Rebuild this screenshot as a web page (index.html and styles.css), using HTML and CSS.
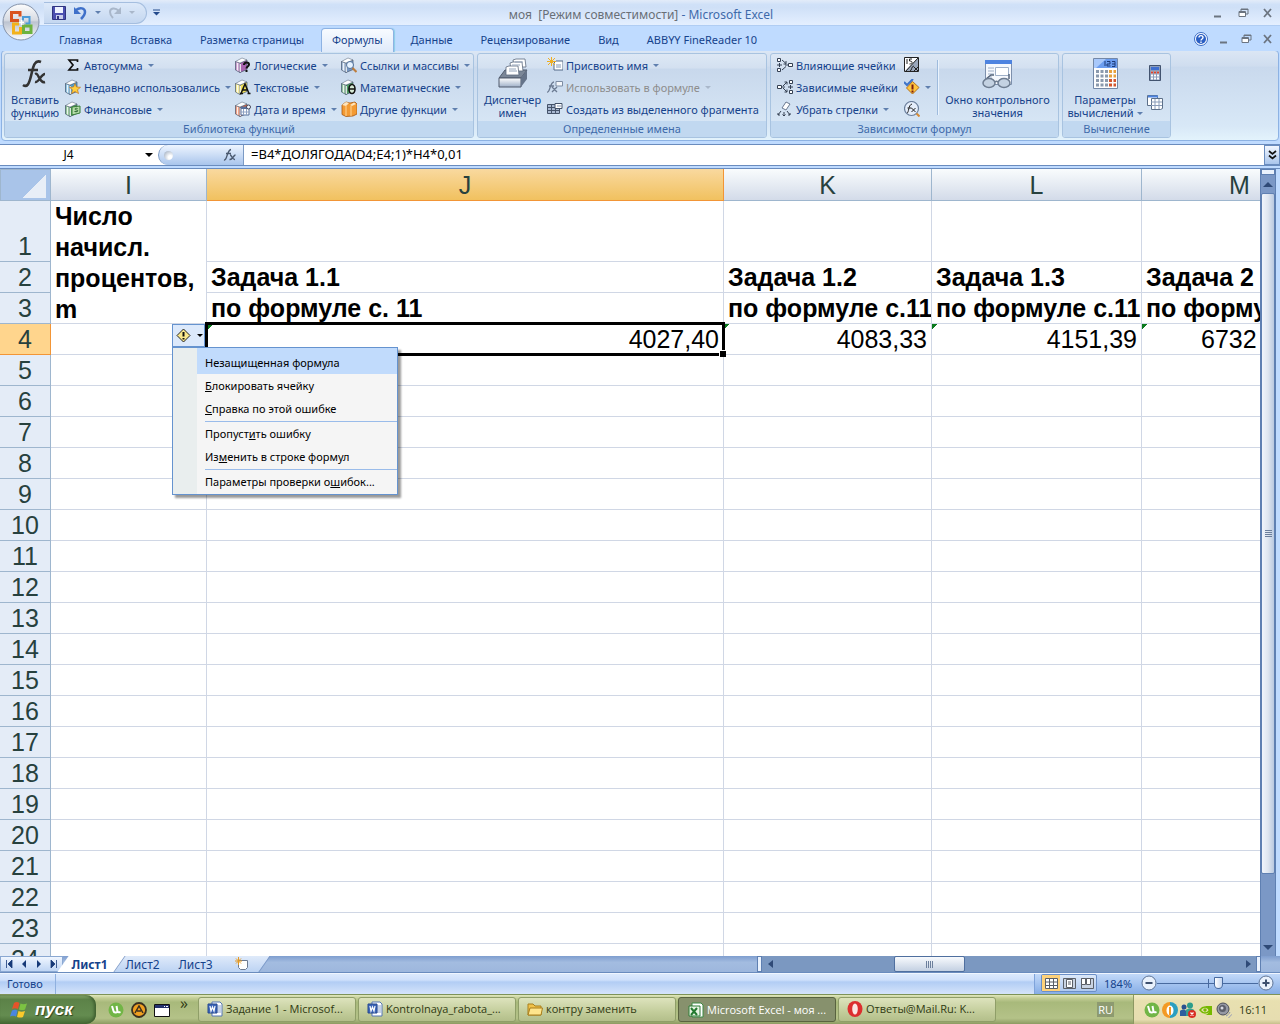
FILE: index.html
```html
<!DOCTYPE html>
<html lang="ru">
<head>
  <meta charset="UTF-8">
  <meta name="viewport" content="width=device-width, initial-scale=1.0">
  <title>моя [Режим совместимости] - Microsoft Excel</title>
  <link rel="stylesheet" href="styles.css">
</head>
<body>
  <svg class="defs" aria-hidden="true">
    <linearGradient id="g-steel" x1="0" y1="0" x2="0" y2="1"><stop offset="0" stop-color="#fff"/><stop offset="1" stop-color="#9fb0c8"/></linearGradient>
    <linearGradient id="g-orb" x1="0" y1="0" x2="0" y2="1"><stop offset="0" stop-color="#fdfdfd"/><stop offset=".45" stop-color="#d7dbe3"/><stop offset=".5" stop-color="#bcc3d0"/><stop offset="1" stop-color="#fbfcfe"/></linearGradient>
    <symbol id="book" viewBox="0 0 16 16">
      <path d="M.5 4.500L5 6v9.500L.5 13z" fill="currentColor" stroke="#4a5a70" stroke-width=".7"/>
      <path d="M5 6l7-3v9.500l-7 3z" fill="currentColor" stroke="#4a5a70" stroke-width=".7"/>
      <path d="M.5 4.500L7 1l5 2-7 3z" fill="#fff" stroke="#4a5a70" stroke-width=".5"/>
      <path d="M1 5l4 1.500v8.500l-4-2z" fill="#fff" fill-opacity=".4"/>
      <path d="M2.500 6v7.500M5.500 7v8" stroke="#fff" stroke-opacity=".8" fill="none"/>
    </symbol>
    <symbol id="word" viewBox="0 0 16 16">
      <path d="M5 1h8l2 2v12H5z" fill="#fff" stroke="#5577b5"/><path d="M10 5h4M10 7h4M10 9h4M10 11h4" stroke="#8ba4d0"/>
      <path d="M1 3h9v9H1z" fill="#3c66b8" stroke="#27498f"/><path d="M3 5l1 5 1.500-4L7 10l1-5" fill="none" stroke="#fff" stroke-width="1.200"/>
    </symbol>
    <symbol id="utor" viewBox="0 0 16 16">
      <circle cx="8" cy="8" r="7.500" fill="#71b546"/><path d="M4 4l1.500 5c.5 2 3 2 4 .5L8.500 4M9.500 9.500c.5 1 1.500 1 3 .5" fill="none" stroke="#fff" stroke-width="2"/>
    </symbol>
    <symbol id="min" viewBox="0 0 12 12"><path d="M2 9.500h7" stroke="#6b7480" stroke-width="2"/></symbol>
    <symbol id="restore" viewBox="0 0 12 12"><path d="M4 4V2h7v5H9M4 2.500h7" stroke="#6b7480" fill="none"/><path d="M2 4.500h6.500v5H2zM2 5.500h6.500" stroke="#6b7480" fill="#fff"/></symbol>
    <symbol id="close" viewBox="0 0 12 12"><path d="M2 2l7 8M9 2l-7 8" stroke="#6b7480" stroke-width="1.800"/></symbol>
  </svg>

  <header class="titlebar">
    <button class="office" aria-label="Office">
      <svg viewBox="0 0 38 38" width="38" height="38"><circle cx="19" cy="19" r="18" fill="url(#g-orb)" stroke="#8593aa"/>
        <g fill="none" stroke-width="3"><path d="M17 17.500H9.500V9.500h8.500v4" stroke="#d9531e"/><path d="M21 17.500V14h6.500v6.500h-4" stroke="#4a9bd8" stroke-width="2"/><path d="M17 21h-5.500v9h7v-6" stroke="#f3b21b"/><path d="M21.500 22v7.500h7.500v-6.500h-7" stroke="#6db33f"/><path d="M17 19.500h5M19.500 17v5" stroke="#fff" stroke-width="1.500"/></g></svg>
    </button>
    <div class="qat">
      <button aria-label="Сохранить"><svg width="16" height="16" viewBox="0 0 16 16"><path d="M1.500 1.500h13v13h-13z" fill="#4b4fb0" stroke="#303480"/><path d="M4 2h8v6H4z" fill="#eef2ff"/><path d="M5 10h7v4H5z" fill="#c8cdea"/><path d="M6 11h2v3H6z" fill="#303480"/></svg></button>
      <button aria-label="Отменить"><svg width="16" height="16" viewBox="0 0 16 16"><path d="M3 5c4-3 9-2 9 2 0 3-2 5-4 7" fill="none" stroke="#3f70c9" stroke-width="2.500"/><path d="M1 2v7h7z" fill="#3f70c9"/></svg></button>
      <span class="caret"></span>
      <button aria-label="Вернуть"><svg width="16" height="16" viewBox="0 0 16 16"><path d="M12 6C8 2 3 3 3 7c0 3 1 4 3 6" fill="none" stroke="#a9b7ca" stroke-width="2"/><path d="M14 2v7H7z" fill="#a9b7ca"/></svg></button>
      <span class="caret pale"></span>
    </div>
    <button class="qat-more" aria-label="Настройка панели"><svg width="7" height="7" viewBox="0 0 7 7"><path d="M0 1h7" stroke="#234a8c"/><path d="M0 3h7L3.500 6.500z" fill="#234a8c"/></svg></button>
    <h1><span>моя &nbsp;[Режим совместимости]</span> - Microsoft Excel</h1>
    <div class="winctl">
      <button aria-label="Свернуть"><svg width="12" height="12"><use href="#min"/></svg></button>
      <button aria-label="Развернуть"><svg width="12" height="12"><use href="#restore"/></svg></button>
      <button aria-label="Закрыть"><svg width="12" height="12"><use href="#close"/></svg></button>
    </div>
  </header>

  <nav class="tabs">
    <button>Главная</button>
    <button>Вставка</button>
    <button>Разметка страницы</button>
    <button class="active">Формулы</button>
    <button>Данные</button>
    <button>Рецензирование</button>
    <button>Вид</button>
    <button>ABBYY FineReader 10</button>
    <div class="winctl">
      <button aria-label="Справка"><svg width="14" height="14" viewBox="0 0 14 14"><circle cx="7" cy="7" r="6.500" fill="#fff" stroke="#3a6cc4"/><circle cx="7" cy="7" r="5" fill="#2a5fc4"/><path d="M5 5.500c0-2.500 4-2.500 4 0C9 7 7 7 7 8.500M7 9.500v1.500" fill="none" stroke="#fff" stroke-width="1.400"/></svg></button>
      <button aria-label="Свернуть книгу"><svg width="12" height="12"><use href="#min"/></svg></button>
      <button aria-label="Развернуть книгу"><svg width="12" height="12"><use href="#restore"/></svg></button>
      <button aria-label="Закрыть книгу"><svg width="12" height="12"><use href="#close"/></svg></button>
    </div>
  </nav>

  <section class="ribbon">
    <div class="group g-library">
      <div class="tools">
        <button class="big">
          <svg width="32" height="32" viewBox="0 0 32 32"><path d="M4 27c4 3 6-1 8-9s3-17 10-14M9 12h10" fill="none" stroke="#333" stroke-width="2.600"/><path d="M16 16c4-2 4 10 10 8M26 16c-4 0-6 9-10 8" fill="none" stroke="#333" stroke-width="2.400"/></svg>
          <span>Вставить<br>функцию</span>
        </button>
        <div class="col c1">
          <button><svg width="16" height="16" viewBox="0 0 16 16"><path d="M12.500 5V3H4l4 5-4 5h8.500v-2" fill="none" stroke="#111" stroke-width="1.700"/></svg>Автосумма<i class="caret"></i></button>
          <button><svg width="16" height="16" viewBox="0 0 16 16"><use href="#book" color="#4fa0d0"/><path d="M10 4.500l1.500 3.500 4 .3-3 2.500 1 3.700-3.500-2-3.500 2 1-3.700-3-2.500 4-.3z" fill="#ffcf3f" stroke="#c4761d" stroke-width=".7"/></svg>Недавно использовались<i class="caret"></i></button>
          <button><svg width="16" height="16" viewBox="0 0 16 16"><use href="#book" color="#4fa055"/><path d="M7 6l8-1v7l-8 2z" fill="#b5dda8" stroke="#377d37"/><path d="M12.500 7.500c-3-1-3 1.500-1 1.500s2 2.500-2 1.500" fill="none" stroke="#24612a"/></svg>Финансовые<i class="caret"></i></button>
        </div>
        <div class="col c2">
          <button><svg width="16" height="16" viewBox="0 0 16 16"><use href="#book" color="#a964b0"/><path d="M9 8c0-3.500 5-3 5-.5 0 2-2.500 2-2.500 4M11.500 13v2" fill="none" stroke="#111" stroke-width="2"/></svg>Логические<i class="caret"></i></button>
          <button><svg width="16" height="16" viewBox="0 0 16 16"><use href="#book" color="#efe05a"/><path d="M6 14.500L10 5l4 9.500M7.500 11h5M5 14.500h3M12.500 14.500h3" fill="none" stroke="#111" stroke-width="1.500"/></svg>Текстовые<i class="caret"></i></button>
          <button><svg width="16" height="16" viewBox="0 0 16 16"><use href="#book" color="#e2653a"/><path d="M6 6h8v8H6z" fill="#fff" stroke="#57709c"/><path d="M6 7h8" stroke="#57709c" stroke-width="2"/><path d="M8.500 8v6M11.500 8v6M6 11h8" stroke="#8fa2c4"/><circle cx="13.500" cy="6" r="2" fill="#f4f7ff" stroke="#445"/></svg>Дата и время<i class="caret"></i></button>
        </div>
        <div class="col c3">
          <button><svg width="16" height="16" viewBox="0 0 16 16"><use href="#book" color="#7596c2"/><circle cx="9" cy="8" r="3.500" fill="#e7f3ff" stroke="#51719b"/><path d="M11.500 11l4 4" stroke="#bd7d3c" stroke-width="2.200"/></svg>Ссылки и массивы<i class="caret"></i></button>
          <button><svg width="16" height="16" viewBox="0 0 16 16"><use href="#book" color="#4f9c62"/><ellipse cx="11" cy="10" rx="3" ry="4.500" fill="#d6ead6" stroke="#111" stroke-width="1.600"/><path d="M8 10h6" stroke="#111" stroke-width="1.500"/></svg>Математические<i class="caret"></i></button>
          <button><svg width="16" height="16" viewBox="0 0 16 16"><path d="M1 4l4-3 4 1 5-1 2 2v10l-4 2-7 .5-4-2z" fill="#f39a33" stroke="#a85810" stroke-width=".8"/><path d="M1 4l4-3 3 1-3 3zM9 4l4-2.500 2 1.500-4 2z" fill="#fde4bd"/><path d="M5 5v10M10 5v10" stroke="#ffd596"/></svg>Другие функции<i class="caret"></i></button>
        </div>
      </div>
      <div class="caption">Библиотека функций</div>
    </div>

    <div class="group g-names">
      <div class="tools">
        <button class="big">
          <svg width="32" height="32" viewBox="0 0 32 32"><path d="M2 20l6-8h22l-6 8z" fill="#7b8798" stroke="#505b6c"/><g fill="#fff" stroke="#5e6b7e" stroke-width=".8"><path d="M16 2l3-1h9l1 8h-12z"/><path d="M13 5l3-1h9l1 9h-12z"/><path d="M9 9l3-1h9l1 9H9z"/></g><path d="M18 4h8M15 7h8M12 11h7M12 13h8" stroke="#96a6bc"/><path d="M2 20h22v9H2z" fill="url(#g-steel)" stroke="#505b6c"/><path d="M24 20l6-8v9l-6 8z" fill="#66748a"/></svg>
          <span>Диспетчер<br>имен</span>
        </button>
        <div class="col">
          <button><svg width="16" height="16" viewBox="0 0 16 16"><path d="M7 6l2-2h7v9H7z" fill="#fff" stroke="#556b88"/><path d="M9 8h5M9 10h5" stroke="#8397b5"/><path d="M4.500 0v9M0 4.500h9M1 1l7 7M8 1L1 8" stroke="#efae22"/></svg>Присвоить имя<i class="caret"></i></button>
          <button disabled><svg width="16" height="16" viewBox="0 0 16 16"><path d="M0 13c3 1 3-10 7-10M2 7h5M5 8l5 5M10 8l-5 5" fill="none" stroke="#6c7b92" stroke-width="1.300"/><path d="M9 2.500h6.500v4.500H9z" fill="#f4f7fb" stroke="#7d8ca3"/></svg>Использовать в формуле<i class="caret pale"></i></button>
          <button><svg width="16" height="16" viewBox="0 0 16 16"><path d="M.5 3.500h12v9H.5zM.5 6.500h12M.5 9.500h12M4.500 3v9M8.500 3v9" fill="#a9b9d2" stroke="#44536a"/><path d="M8 2.500h7v5H8z" fill="#fff" stroke="#44536a"/><path d="M10 5h4" stroke="#8397b5"/></svg>Создать из выделенного фрагмента</button>
        </div>
      </div>
      <div class="caption">Определенные имена</div>
    </div>

    <div class="group g-audit">
      <div class="tools">
        <div class="col">
          <button><svg width="16" height="16" viewBox="0 0 16 16"><path d="M.5 1.500h3v3h-3zM.5 11.500h3v3h-3zM11.500 6.500h4v3h-4z" fill="#fff" stroke="#344053"/><path d="M0 8h5M2.500 6v4M5 3l4 3.500M9 4v3H6.500M5 13l4-3.500M8 8h3" stroke="#344053" fill="none"/></svg>Влияющие ячейки</button>
          <button><svg width="16" height="16" viewBox="0 0 16 16"><path d="M12.500 1.500h3v3h-3zM12.500 11.500h3v3h-3zM.5 6.500h4v3h-4z" fill="#fff" stroke="#344053"/><path d="M11 8h5M13.500 6v4M6 7l4-4M7.500 3H10v2.500M6 9l4 4M7.500 13H10v-2.500M5 8h3" stroke="#344053" fill="none"/></svg>Зависимые ячейки</button>
          <button><svg width="16" height="16" viewBox="0 0 16 16"><path d="M5 7l4-6 4 2-4 6z" fill="#fff" stroke="#6a7890"/><path d="M4 10l-3 4m0-2v2h2M7 11v4M5.500 13.500L7 15l1.500-1.500M10 10l3 4m0-2v2h-2" fill="none" stroke="#344053"/></svg>Убрать стрелки<i class="caret"></i></button>
        </div>
        <div class="col icons">
          <button aria-label="Показать формулы"><svg width="16" height="16" viewBox="0 0 16 16"><path d="M.5.500h14v14H.5z" fill="#fff" stroke="#222"/><path d="M14 1v13H1z" fill="#9aa7bb"/><path d="M3 2v5M8 2H5.500v2c4 0 3 3 0 3M1 15L14 1M6 14c2 0 1-5 4-5M10 10l4 4M14 10l-4 4" fill="none" stroke="#222"/></svg></button>
          <button aria-label="Проверка ошибок"><svg width="16" height="16" viewBox="0 0 16 16"><path d="M8.500 2.500l6.500 6-6.500 6.500L2.500 9z" fill="#ffc53d" stroke="#b4711c"/><path d="M8.500 5.500v5M8.500 11.500v2" stroke="#7a1d10" stroke-width="2"/><path d="M0 3l3 3L9 0" stroke="#3f74c8" stroke-width="2" fill="none"/></svg><i class="caret"></i></button>
          <button aria-label="Вычислить формулу"><svg width="16" height="16" viewBox="0 0 16 16"><circle cx="7.500" cy="7.500" r="7" fill="#e5eefb" stroke="#6b7f9c" stroke-width="1.200"/><path d="M3 12c2 0 1-8 5-9M3.500 7h4M7.500 7l4 4M11.500 7l-4 4" fill="none" stroke="#222"/><path d="M12.500 12.500l3 3" stroke="#d78b35" stroke-width="2"/></svg></button>
        </div>
        <div class="vline"></div>
        <button class="big">
          <svg width="32" height="32" viewBox="0 0 32 32"><path d="M3.500 2.500h26v24h-26z" fill="#f5f8fd" stroke="#7d90ad"/><path d="M3 2h27v4H3z" fill="#4d83e0"/><path d="M6 10h6M6 13h6M6 16h6M6 19h4" stroke="#9fb0c8"/><path d="M13.500 9.500h13v8h-13z" fill="#fff" stroke="#9fb0c8"/><path d="M4 21l5-4h3M27 21v-5" fill="none" stroke="#56657b" stroke-width="1.500"/><g fill="#c4d2e2" stroke="#6e7d91" stroke-width="1.500"><ellipse cx="7" cy="25" rx="6" ry="4.500"/><ellipse cx="22" cy="25" rx="6" ry="4.500"/></g><path d="M13 24c1-1 2-1 3 0" fill="none" stroke="#6e7d91" stroke-width="1.500"/></svg>
          <span>Окно контрольного<br>значения</span>
        </button>
      </div>
      <div class="caption">Зависимости формул</div>
    </div>

    <div class="group g-calc">
      <div class="tools">
        <button class="big">
          <svg width="32" height="32" viewBox="0 0 32 32"><path d="M4.500.500h24v30h-24z" fill="#fdfdfe" stroke="#7388a8"/><path d="M5 1h23v9H5z" fill="#6b9df0"/><path d="M5 1h12L7 10H5z" fill="#a8c8fb"/><path d="M16 3v5M18 3.500h3v2.500h-3V8h3.500M23 3.500h3v5h-3M23 6h3" stroke="#1d3b78" fill="none"/><g fill="none" stroke-width="3" stroke-dasharray="3 1.500"><path d="M7 13.500h12M7 18h12M7 22.500h12M7 27h12" stroke="#8a99ad"/><path d="M20 13.500h7M20 18h7" stroke="#e8a13c"/><path d="M20 22.500h7M20 27h7" stroke="#d3562f"/></g></svg>
          <span>Параметры<br>вычислений<i class="caret"></i></span>
        </button>
        <div class="col pair">
          <button aria-label="Пересчет"><svg width="16" height="16" viewBox="0 0 16 16"><path d="M2.500.500h11v15h-11z" fill="#8b9dbb" stroke="#42536f"/><path d="M4 2h8v3H4z" fill="#3f6fd0"/><path d="M4 7.500h8M4 10.500h8M4 13.500h8" stroke="#fff" stroke-width="2" stroke-dasharray="2 1"/><path d="M4 7.500h8" stroke="#d8452f" stroke-width="2" stroke-dasharray="2 1"/></svg></button>
          <button aria-label="Произвести вычисления"><svg width="16" height="16" viewBox="0 0 16 16"><path d="M.5 1.500h10v10H.5z" fill="#fff" stroke="#5d7089"/><path d="M1 2.500h10" stroke="#4d83e0" stroke-width="2"/><path d="M4.500 4.500h11v10l-2 1h-9z" fill="#fff" stroke="#5d7089"/><path d="M4 8h11M4 11.500h11M8 5v10M12 5v10" stroke="#8a9cb8"/></svg></button>
        </div>
      </div>
      <div class="caption">Вычисление</div>
    </div>
  </section>

  <div class="formulabar">
    <div class="namebox"><input type="text" value="J4" aria-label="Имя"><button aria-label="Список имен"><i class="caret dark"></i></button></div>
    <div class="fxpart"><span class="knob"></span>
      <button aria-label="Вставить функцию"><svg width="14" height="14" viewBox="0 0 14 14"><path d="M1 12c3 1 3-10 7-10.500M3 5.500h5M7 7c2 0 2 5 5 4.500M12.500 7c-2 0-3 5-6 4.500" fill="none" stroke="#4b5a70" stroke-width="1.400"/></svg></button></div>
    <input class="formula" type="text" value="=B4*ДОЛЯГОДА(D4;E4;1)*H4*0,01" aria-label="Строка формул">
    <button class="expand" aria-label="Развернуть строку формул"><svg width="9" height="10" viewBox="0 0 9 10"><path d="M1 1l3.500 3L8 1M1 5.500l3.500 3L8 5.500" fill="none" stroke="#111" stroke-width="1.700"/></svg></button>
  </div>

  <main class="workarea">
    <div class="gridwrap">
      <table class="grid">
        <colgroup><col class="w-row"><col class="w-i"><col class="w-j"><col class="w-k"><col class="w-l"><col class="w-m"></colgroup>
        <thead>
          <tr><th class="corner"></th><th>I</th><th class="sel">J</th><th>K</th><th>L</th><th>M</th></tr>
        </thead>
        <tbody>
          <tr class="tall"><th>1</th><td rowspan="3" class="b wrap"><div>Число начисл. процентов, m</div></td><td></td><td></td><td></td><td></td></tr>
          <tr><th>2</th><td class="b">Задача 1.1</td><td class="b">Задача 1.2</td><td class="b">Задача 1.3</td><td class="b">Задача 2</td></tr>
          <tr><th>3</th><td class="b">по формуле с. 11</td><td class="b">по формуле с.11</td><td class="b">по формуле с.11</td><td class="b">по формуле</td></tr>
          <tr><th class="sel">4</th><td></td><td class="num cur">4027,40
            <div class="cursor"></div>
            <button class="smart" aria-label="Ошибка в формуле"><svg width="15" height="15" viewBox="0 0 15 15"><path d="M7.500 1l6.500 6.500-6.500 6.500L1 7.500z" fill="#fbe88b" stroke="#222"/><path d="M7.500 4v4.500M7.500 10v1.500" stroke="#111" stroke-width="2"/></svg><i class="caret dark"></i></button>
            <div class="menu" role="menu">
              <button class="head" role="menuitem">Незащищенная формула</button>
              <button role="menuitem"><u>Б</u>локировать ячейку</button>
              <button role="menuitem"><u>С</u>правка по этой ошибке</button>
              <hr>
              <button role="menuitem">Пропуст<u>и</u>ть ошибку</button>
              <button role="menuitem">Из<u>м</u>енить в строке формул</button>
              <hr>
              <button role="menuitem">Параметры проверки о<u>ш</u>ибок...</button>
            </div>
          </td><td class="num err">4083,33</td><td class="num err">4151,39</td><td class="num err part">6732</td></tr>
          <tr><th>5</th><td></td><td></td><td></td><td></td><td></td></tr>
          <tr><th>6</th><td></td><td></td><td></td><td></td><td></td></tr>
          <tr><th>7</th><td></td><td></td><td></td><td></td><td></td></tr>
          <tr><th>8</th><td></td><td></td><td></td><td></td><td></td></tr>
          <tr><th>9</th><td></td><td></td><td></td><td></td><td></td></tr>
          <tr><th>10</th><td></td><td></td><td></td><td></td><td></td></tr>
          <tr><th>11</th><td></td><td></td><td></td><td></td><td></td></tr>
          <tr><th>12</th><td></td><td></td><td></td><td></td><td></td></tr>
          <tr><th>13</th><td></td><td></td><td></td><td></td><td></td></tr>
          <tr><th>14</th><td></td><td></td><td></td><td></td><td></td></tr>
          <tr><th>15</th><td></td><td></td><td></td><td></td><td></td></tr>
          <tr><th>16</th><td></td><td></td><td></td><td></td><td></td></tr>
          <tr><th>17</th><td></td><td></td><td></td><td></td><td></td></tr>
          <tr><th>18</th><td></td><td></td><td></td><td></td><td></td></tr>
          <tr><th>19</th><td></td><td></td><td></td><td></td><td></td></tr>
          <tr><th>20</th><td></td><td></td><td></td><td></td><td></td></tr>
          <tr><th>21</th><td></td><td></td><td></td><td></td><td></td></tr>
          <tr><th>22</th><td></td><td></td><td></td><td></td><td></td></tr>
          <tr><th>23</th><td></td><td></td><td></td><td></td><td></td></tr>
          <tr><th>24</th><td></td><td></td><td></td><td></td><td></td></tr>
        </tbody>
      </table>
    </div>
    <div class="vscroll">
      <span class="split"></span>
      <button aria-label="Вверх"><i class="arr up"></i></button>
      <div class="thumb"><i></i></div>
      <div class="rest"></div>
      <button aria-label="Вниз"><i class="arr down"></i></button>
    </div>
  </main>

  <div class="sheetbar">
    <div class="sheetnav">
      <button aria-label="Первый лист"><svg width="8" height="8" viewBox="0 0 8 8"><path d="M1.500 0v8M7 0v8L3 4z" fill="#173a78" stroke="#173a78" stroke-width=".8"/></svg></button>
      <button aria-label="Предыдущий лист"><svg width="8" height="8" viewBox="0 0 8 8"><path d="M6 0v8L2 4z" fill="#173a78"/></svg></button>
      <button aria-label="Следующий лист"><svg width="8" height="8" viewBox="0 0 8 8"><path d="M2 0v8l4-4z" fill="#173a78"/></svg></button>
      <button aria-label="Последний лист"><svg width="8" height="8" viewBox="0 0 8 8"><path d="M6.500 0v8M1 0v8l4-4z" fill="#173a78" stroke="#173a78" stroke-width=".8"/></svg></button>
    </div>
    <div class="sheets">
      <button class="active"><span>Лист1</span></button>
      <button><span>Лист2</span></button>
      <button><span>Лист3</span></button>
      <button aria-label="Вставить лист"><span><svg width="16" height="14" viewBox="0 0 16 14"><path d="M4.500 3.500h9v7l-2 2h-5l-2-2z" fill="#fff" stroke="#6d7b92"/><path d="M4.500 0v8M1 4h7M2 1.500l5 5M7 1.500l-5 5" stroke="#e49a25"/></svg></span></button>
    </div>
    <div class="hscroll">
      <span class="split"></span>
      <button aria-label="Влево"><i class="arr left"></i></button>
      <div class="track"><div class="thumb"><i></i></div></div>
      <button aria-label="Вправо"><i class="arr right"></i></button>
      <span class="split"></span>
    </div>
  </div>

  <footer class="status">
    <span class="ready">Готово</span>
    <div class="zoombox">
      <div class="views">
        <button class="on" aria-label="Обычный"><svg width="13" height="11" viewBox="0 0 13 11"><path d="M.5.500h12v10H.5zM.5 4h12M.5 7.500h12M4.500 0v11M8.500 0v11" fill="#fff" stroke="#5b5f66"/></svg></button>
        <button aria-label="Разметка страницы"><svg width="13" height="11" viewBox="0 0 13 11"><path d="M.5.500h12v10H.5z" fill="#c9d3e2" stroke="#5b5f66"/><path d="M3.500 1.500h6v8h-6z" fill="#fff" stroke="#5b5f66"/><path d="M5 4h3M5 6h3" stroke="#5b5f66"/></svg></button>
        <button aria-label="Страничный"><svg width="13" height="11" viewBox="0 0 13 11"><path d="M.5.500h12v10H.5z" fill="#c9d3e2" stroke="#5b5f66"/><path d="M.5.500h4v6h-4zM5.500.500h4v6h-4z" fill="#fff" stroke="#5b5f66"/></svg></button>
      </div>
      <label for="zoom">184%</label>
      <button class="round" aria-label="Уменьшить"><svg width="16" height="16" viewBox="0 0 16 16"><circle cx="8" cy="8" r="7" fill="#e9f1fc" stroke="#5d7396"/><path d="M4.500 8h7" stroke="#3d4f6e" stroke-width="2"/></svg></button>
      <input id="zoom" type="range" min="0" max="100" value="62">
      <button class="round" aria-label="Увеличить"><svg width="16" height="16" viewBox="0 0 16 16"><circle cx="8" cy="8" r="7" fill="#e9f1fc" stroke="#5d7396"/><path d="M4.500 8h7M8 4.500v7" stroke="#3d4f6e" stroke-width="2"/></svg></button>
    </div>
  </footer>

  <div class="taskbar">
    <button class="start"><svg width="20" height="18" viewBox="0 0 20 18"><path d="M4 2c2-1.500 4-1 5.500 0L8 8c-2-1-4-1-6 0z" fill="#e5532a"/><path d="M10.500 2.500c2 1 4 1 6.500 0l-2 6c-2 1-4 .5-6 0z" fill="#7cc242"/><path d="M2 9.500c2-1 4-1 5.500 0L6 15.500c-2-1-4-1-6 0z" fill="#4a86e0"/><path d="M8.500 10c2 1 4 1 6.500 0l-2 6c-2 1-4 .5-6 0z" fill="#fbc92c"/></svg>пуск</button>
    <div class="quick">
      <button aria-label="uTorrent"><svg width="16" height="16"><use href="#utor"/></svg></button>
      <button aria-label="AIMP"><svg width="16" height="16" viewBox="0 0 16 16"><circle cx="8" cy="8" r="7" fill="#f0a020" stroke="#3a3020" stroke-width="1.800"/><path d="M4 11l4-7 4 7M6 9h4" fill="none" stroke="#3a3020" stroke-width="1.500"/></svg></button>
      <button aria-label="Окно"><svg width="16" height="16" viewBox="0 0 16 16"><path d="M.5 2.500h15v12H.5z" fill="#fff" stroke="#111"/><path d="M1 4.500h14" stroke="#24326e" stroke-width="3"/><path d="M10 4.500h1M12 4.500h2" stroke="#fff"/></svg></button>
      <span class="chev">»</span>
    </div>
    <div class="tasks">
      <button><svg width="16" height="16"><use href="#word"/></svg><span>Задание 1 - Microsof...</span></button>
      <button><svg width="16" height="16"><use href="#word"/></svg><span>Kontrolnaya_rabota_...</span></button>
      <button><svg width="16" height="16" viewBox="0 0 16 16"><path d="M1 3h5l2 2h6v9H1z" fill="#f0c24a" stroke="#a97f1d"/><path d="M1 14l2-7h12.500L14 14z" fill="#ffe58c" stroke="#a97f1d"/></svg><span>контру заменить</span></button>
      <button class="pressed"><svg width="16" height="16" viewBox="0 0 16 16"><path d="M4 1h9l2 2v12H4z" fill="#fff" stroke="#3d8a45"/><path d="M1 4h11v10H1z" fill="#e8f5e4" stroke="#2f7d39"/><path d="M3 6l6 7M9 6l-6 7" stroke="#237a2f" stroke-width="2"/></svg><span>Microsoft Excel - моя ...</span></button>
      <button><svg width="16" height="16" viewBox="0 0 16 16"><ellipse cx="8" cy="8" rx="7.500" ry="8" fill="#dc2f2f"/><ellipse cx="8" cy="8" rx="2.800" ry="5.500" fill="#fbe8e4"/></svg><span>Ответы@Mail.Ru: K...</span></button>
    </div>
    <span class="lang">RU</span>
    <div class="tray">
      <svg width="16" height="16"><use href="#utor"/></svg>
      <svg width="16" height="16" viewBox="0 0 16 16"><path d="M8 0a8 8 0 0 0 0 16z" fill="#f39a24"/><path d="M8 0a8 8 0 0 1 0 16z" fill="#2a9fc0"/><ellipse cx="8" cy="8.500" rx="3.500" ry="5" fill="#fff"/><path d="M8 5v8" stroke="#f39a24" stroke-width="2"/></svg>
      <svg width="16" height="16" viewBox="0 0 16 16"><circle cx="10" cy="3.500" r="3" fill="#2d9d8b"/><circle cx="4" cy="5" r="2.500" fill="#28518f"/><path d="M6 14V8c2-2 6-2 8 0v6z" fill="#38a08e"/><path d="M0 14V9c2-2 5-2 6 0v5z" fill="#2d5f9e"/><circle cx="12" cy="12" r="4" fill="#d92c22"/><path d="M10.500 10.500l3 3M13.500 10.500l-3 3" stroke="#fff" stroke-width="1.300"/></svg>
      <svg width="16" height="16" viewBox="0 0 16 16"><path d="M2 8c3-4 7-4 10 0-3 4-7 4-10 0z" fill="none" stroke="#76b900" stroke-width="1.500"/><path d="M7 4h7v9H7c5-1 5-6 0-9z" fill="#76b900"/><circle cx="7" cy="8" r="1.700" fill="#76b900"/></svg>
      <svg width="16" height="16" viewBox="0 0 16 16"><circle cx="7" cy="7" r="6" fill="#9598a4" stroke="#4c4e5a"/><circle cx="6.500" cy="6.500" r="3.500" fill="#5c5e6a"/><circle cx="6" cy="6" r="1.500" fill="#d8dae2"/><path d="M10 14c2-1 3-2 4-4M12.500 15.500c1.500-.5 2-1.500 3-3" fill="none" stroke="#8b93b8"/></svg>
      <time>16:11</time>
    </div>
  </div>
</body>
</html>
```
FILE: styles.css
```css
* {
  box-sizing: border-box;
}
html, body {
  height: 100%;
}
body {
  margin: 0;
  display: flex;
  flex-direction: column;
  overflow: hidden;
  background: #bfdbff;
  font-family: "Noto Sans", "Open Sans", sans-serif;
  font-size: 11px;
  line-height: 13px;
  color: #15428b;
}
button, input {
  font: inherit;
  color: inherit;
  background: none;
  border: 0;
  padding: 0;
  margin: 0;
}
svg {
  display: block;
  flex: none;
}
.defs {
  position: absolute;
  width: 0;
  height: 0;
}
.caret {
  display: inline-block;
  flex: none;
  border: 3px solid transparent;
  border-top-color: #5f7fae;
  border-bottom: 0;
}
.caret.pale {
  border-top-color: #a9b7ca;
}
.caret.dark {
  display: block;
  border-top-color: #000;
}

/* title */
.titlebar {
  position: relative;
  display: flex;
  align-items: center;
  height: 26px;
  flex: none;
  padding-left: 44px;
  background: linear-gradient(#e3ecf9 0, #d0e1f8 18%, #cfe0f7 30%, #e4efff 100%);
  border-bottom: 1px solid #b0cdf3;
}
.office {
  position: absolute;
  left: 2px;
  top: 3px;
  z-index: 2;
}
.qat {
  display: flex;
  align-items: center;
  gap: 6px;
  height: 22px;
  padding: 0 11px 0 7px;
  border: 1px solid #a5bedf;
  border-left: 0;
  border-radius: 0 11px 11px 0;
  background: linear-gradient(#dde9f9, #c4d7f0);
}
.qat-more {
  margin-left: 6px;
}
.titlebar h1 {
  flex: 1;
  margin: 0;
  padding: 3px 90px 0 0;
  text-align: center;
  font-size: 12px;
  font-weight: 400;
  color: #3e6aaa;
}
.titlebar h1 span {
  color: #696f77;
}
.winctl {
  display: flex;
  align-items: center;
  gap: 13px;
  margin-left: auto;
  padding-right: 6px;
}

/* ribbon tabs */
.tabs {
  display: flex;
  height: 25px;
  flex: none;
  padding-left: 45px;
  background: #bfdbff;
}
.tabs > button {
  padding: 0 14px;
  height: 26px;
  white-space: nowrap;
}
.tabs > button.active {
  margin: 2px 3px 0;
  padding: 0 10px 2px;
  height: 24px;
  border: 1px solid #8db2e3;
  border-bottom: 0;
  border-radius: 4px 4px 0 0;
  background: linear-gradient(#f8fbff, #dfeafa);
  box-shadow: 1px 0 1px #8ccfe8;
}
.tabs .winctl {
  gap: 10px;
}

.ribbon {
  display: flex;
  gap: 3px;
  flex: none;
  height: 91px;
  margin: -1px 1px 3px;
  padding: 2px 2px 3px;
  border: 1px solid #8db2e3;
  border-radius: 4px;
  background: linear-gradient(#dbe6f4 0, #cfddef 17%, #c9d9ed 18%, #d8e8f7 85%, #e3f3fc 100%);
  position: relative;
  z-index: -1;
}
.group {
  display: flex;
  flex-direction: column;
  flex: none;
  height: 85px;
  border: 1px solid #a8c3e0;
  border-radius: 3px;
  background: linear-gradient(#dde8f5 0, #d3e0f0 17%, #c8d8ec 18%, #dae9f7 100%);
  overflow: hidden;
}
.g-library { width: 470px; }
.g-names { width: 290px; }
.g-audit { width: 289px; }
.g-calc { width: 109px; }
.tools {
  display: flex;
  flex: 1;
}
.caption {
  height: 16px;
  line-height: 15px;
  text-align: center;
  color: #3e6aaa;
  background: #c1d8f0;
}
.big {
  display: flex;
  flex-direction: column;
  align-items: center;
  gap: 3px;
  padding: 4px 0 0;
  text-align: center;
  white-space: nowrap;
}
.big .caret {
  margin: 0 0 2px 3px;
}
.g-library .big { width: 60px; }
.g-names .big { width: 69px; }
.g-audit .big { width: 119px; }
.g-calc .big { width: 84px; }
.col {
  display: flex;
  flex-direction: column;
}
.col button {
  display: flex;
  align-items: center;
  gap: 3px;
  height: 22px;
  white-space: nowrap;
}
.col .caret {
  margin-left: 2px;
}
.col button:disabled {
  color: #8d8d8d;
}
.c1 { width: 170px; }
.c2 { width: 106px; }
.g-audit .col {
  padding-left: 6px;
  width: 127px;
}
.g-audit .icons {
  width: 39px;
}
.vline {
  width: 1px;
  margin: 6px 0 6px;
  background: #9ebbdd;
  box-shadow: 1px 0 #eaf3fd;
}
.pair {
  padding-top: 8px;
  gap: 7px;
}

/* formula bar */
.formulabar {
  display: flex;
  flex: none;
  height: 22px;
  border: solid #6a8cbe;
  border-width: 1px 0;
  background: #fff;
  color: #000;
  font-size: 12px;
}
.namebox {
  display: flex;
  align-items: center;
  width: 158px;
}
.namebox input {
  flex: 1;
  min-width: 0;
  padding: 0 8px 2px 0;
  text-align: center;
}
.namebox button {
  padding-right: 5px;
}
.namebox .caret {
  border-width: 4px 4px 0;
}
.fxpart {
  display: flex;
  align-items: center;
  justify-content: space-between;
  width: 86px;
  padding: 0 6px 0 5px;
  border: 1px solid #7b9ac4;
  border-width: 0 1px;
  border-radius: 10px 0 0 10px;
  background: linear-gradient(#eef5ff, #a9c5ec);
}
.knob {
  width: 9px;
  height: 9px;
  border-radius: 50%;
  background: radial-gradient(circle at 70% 70%, #fff 20%, #94a3b8);
}
.formula {
  flex: 1;
  min-width: 0;
  padding: 0 0 2px 7px;
  font-size: 13px;
}
.expand {
  width: 16px;
  display: flex;
  align-items: center;
  justify-content: center;
  border: 1px solid #6a8cbe;
  background: linear-gradient(#f2f7ff, #a9c5ec);
}

/* sheet */
.workarea {
  display: flex;
  flex: 1;
  min-height: 0;
  margin-top: 2px;
  border-top: 1px solid #6a8cbe;
}
.gridwrap {
  flex: 1;
  min-width: 0;
  overflow: hidden;
  background: #fff;
}
.grid {
  table-layout: fixed;
  width: 1338px;
  border-collapse: separate;
  border-spacing: 0;
  font-family: "Liberation Sans", Arial, sans-serif;
  font-size: 25px;
  line-height: 30px;
  color: #000;
}
.w-row { width: 51px; }
.w-i { width: 156px; }
.w-j { width: 517px; }
.w-k { width: 208px; }
.w-l { width: 210px; }
.w-m { width: 196px; }
.grid th {
  padding: 0;
  height: 31px;
  font-weight: 400;
  color: #27413e;
  border-right: 1px solid #9eb6ce;
  border-bottom: 1px solid #9eb6ce;
  background: #e4ecf7;
  vertical-align: bottom;
}
.grid thead th {
  height: 32px;
  background: linear-gradient(#f9fcfd, #d3dbe9);
}
.grid thead th.sel {
  background: linear-gradient(#f9d99f, #f1c15f);
  border-color: #f29536;
}
.grid tbody th.sel {
  background: #ffd58d;
  border-color: #f29536;
}
.grid thead .corner {
  border: 1px solid #9eb6ce;
  background: linear-gradient(135deg, transparent 50%, #e8eef7 50%) 22px 4px / 23px 24px no-repeat, #a9c4e9;
}
.grid td {
  padding: 0 4px;
  height: 31px;
  border-right: 1px solid #d0d7e5;
  border-bottom: 1px solid #d0d7e5;
  white-space: nowrap;
  overflow: hidden;
  vertical-align: bottom;
}
.grid .tall th {
  height: 61px;
}
.grid .b {
  font-weight: 700;
}
.grid .wrap {
  white-space: normal;
  line-height: 31px;
}
.wrap div {
  height: 122px;
}
.grid .num {
  text-align: right;
}
.grid .part {
  text-align: left;
  padding-left: 59px;
}
.grid .err {
  background: linear-gradient(135deg, #0b7a1e 4px, transparent 4px) no-repeat;
}
.grid .cur {
  position: relative;
  overflow: visible;
}
.cursor {
  position: absolute;
  inset: -2px;
  border: 3px solid #000;
}
.cursor::before {
  content: "";
  position: absolute;
  left: 0;
  top: 0;
  border: solid transparent;
  border-width: 0 5px 5px 0;
  border-left: 0 solid;
  background: linear-gradient(135deg, #0b7a1e 3px, transparent 3px) border-box;
}
.cursor::after {
  content: "";
  position: absolute;
  right: -4px;
  bottom: -4px;
  width: 6px;
  height: 6px;
  background: #000;
  border: solid #fff;
  border-width: 1px 0 0 1px;
}
.smart {
  position: absolute;
  left: -35px;
  top: 0;
  z-index: 3;
  display: flex;
  align-items: center;
  gap: 6px;
  width: 33px;
  height: 23px;
  padding-left: 3px;
  border: 1px solid #6593cf;
  background: #dce9fb;
}
.menu {
  position: absolute;
  left: -35px;
  top: 23px;
  z-index: 4;
  width: 226px;
  padding-bottom: 1px;
  border: 1px solid #6593cf;
  background: linear-gradient(90deg, #e9eeee 24px, #f5f5f5 24px);
  box-shadow: 3px 3px 2px rgba(0, 0, 0, .4);
  font-family: "Noto Sans", "Open Sans", sans-serif;
  font-size: 11px;
  line-height: 13px;
}
.menu button {
  display: block;
  width: 100%;
  height: 23px;
  padding-left: 32px;
  text-align: left;
}
.menu .head {
  height: 26px;
  padding-top: 2px;
  background: linear-gradient(90deg, transparent 24px, #c1dbfc 24px);
}
.menu hr {
  margin: 1px 0 0 32px;
  border: 0;
  border-top: 1px solid #9abcea;
}
.arr {
  display: block;
  width: 0;
  height: 0;
  border: 5px solid transparent;
}
.arr.up { border-bottom-color: #2f4a77; border-top: 0; }
.arr.down { border-top-color: #2f4a77; border-bottom: 0; }
.arr.left { border-right-color: #2f4a77; border-left: 0; }
.arr.right { border-left-color: #2f4a77; border-right: 0; }
.vscroll {
  display: flex;
  flex-direction: column;
  width: 16px;
  margin-right: 4px;
  background: #7b98c6;
  border: 1px solid #5f80b2;
  border-width: 0 1px;
}
.vscroll button {
  display: flex;
  align-items: center;
  justify-content: center;
  height: 18px;
  flex: none;
}
.split {
  flex: none;
  border: 1px solid #5f80b2;
  background: #eaf2fd;
}
.vscroll .split {
  height: 6px;
}
.vscroll .thumb {
  flex: 681;
  display: flex;
  align-items: center;
  justify-content: center;
  border: 1px solid #5f80b2;
  border-radius: 2px;
  background: linear-gradient(90deg, #f0f5fc, #dfe6f0 50%, #b9c9e0);
}
.vscroll .thumb i {
  width: 7px;
  height: 8px;
  background: repeating-linear-gradient(#6c7f9c 0 1px, transparent 1px 2px);
}
.vscroll .rest {
  flex: 64;
}

/* sheet tabs */
.sheetbar {
  display: flex;
  flex: none;
  height: 17px;
  padding-right: 19px;
  background: linear-gradient(#7f9ecf, #a3bce0 40%, #9db7dd);
  border-bottom: 1px solid #6a8cbe;
}
.sheetnav {
  position: relative;
  z-index: 1;
  display: flex;
  align-items: center;
  justify-content: space-around;
  width: 63px;
  background: linear-gradient(#f0f6ff, #bfd5f4);
  border: 1px solid #8aa8d2;
}
.sheets {
  display: flex;
}
.sheets button {
  position: relative;
  width: 53px;
  font-size: 12px;
  line-height: 15px;
}
.sheets button::before {
  content: "";
  position: absolute;
  inset: 0 -4px 0 0;
  transform: skewX(-35deg);
  background: linear-gradient(#dfeafa, #bcd3f3);
  border-right: 1px solid #7b99c8;
}
.sheets .active {
  z-index: 1;
  font-weight: 700;
}
.sheets .active::before {
  background: #fff;
}
.sheets button span {
  position: relative;
  display: flex;
  justify-content: center;
}
.sheets button:last-child {
  width: 39px;
}
.hscroll {
  display: flex;
  flex: none;
  width: 504px;
  margin-left: auto;
  background: #7b98c1;
}
.hscroll .split {
  width: 5px;
}
.hscroll button {
  display: flex;
  align-items: center;
  justify-content: center;
  width: 16px;
}
.hscroll .arr {
  border-top-width: 4px;
  border-bottom-width: 4px;
}
.hscroll .track {
  flex: 1;
  display: flex;
  padding-left: 116px;
}
.hscroll .thumb {
  display: flex;
  align-items: center;
  justify-content: center;
  width: 71px;
  border: 1px solid #4f6f9f;
  border-radius: 2px;
  background: linear-gradient(#f8fafd, #c3d0e2);
}
.hscroll .thumb i {
  width: 8px;
  height: 7px;
  background: repeating-linear-gradient(90deg, #6c7f9c 0 1px, transparent 1px 2px);
}

/* status */
.status {
  display: flex;
  flex: none;
  height: 21px;
  background: linear-gradient(#dceafd, #cfe0fb 30%, #b2cdf4 40%, #d5e4fa);
  border-top: 1px solid #f0f6ff;
}
.ready {
  width: 56px;
  padding: 3px 0 0 7px;
  border-right: 1px solid #8fb0df;
}
.zoombox {
  display: flex;
  align-items: center;
  width: 246px;
  margin-left: auto;
  padding: 0 0 2px 6px;
  border-left: 1px solid #7fa3da;
  background: linear-gradient(#c2d9f9, #86ade6);
}
.views {
  display: flex;
  margin-right: 7px;
  border: 1px solid #6b8fc7;
  border-radius: 2px;
  background: linear-gradient(#dbe8fa, #b1caef);
}
.views button {
  width: 18px;
  height: 16px;
  display: flex;
  align-items: center;
  justify-content: center;
}
.views .on {
  background: #ffd27a;
}
.zoombox label {
  width: 37px;
}
#zoom {
  width: 101px;
  height: 16px;
  appearance: none;
  background: linear-gradient(#486a9f, #486a9f) 51px 4px / 1px 9px no-repeat, linear-gradient(#486a9f, #486a9f) 0 8px / 100% 1px no-repeat;
}
#zoom::-webkit-slider-thumb {
  appearance: none;
  width: 9px;
  height: 12px;
  border: 1px solid #486a9f;
  border-radius: 1px 1px 5px 5px;
  background: linear-gradient(90deg, #fff, #c4d5ef);
}

/* taskbar */
.taskbar {
  display: flex;
  flex: none;
  height: 30px;
  border-top: 1px solid #7e9358;
  background: linear-gradient(#e1e8bd 0, #c5cf98 10%, #a8b97b 25%, #b4c288 80%, #8c9b62 100%);
  font-family: "Open Sans", "Noto Sans", sans-serif;
  color: #303a12;
}
.start {
  display: flex;
  align-items: center;
  gap: 5px;
  width: 96px;
  padding-left: 10px;
  border-radius: 0 10px 10px 0;
  background: linear-gradient(#8fae71 0, #5c8248 15%, #648c50 70%, #466b35 100%);
  box-shadow: inset -2px 0 3px #3f5f30;
  color: #fff;
  font: italic 700 17px "Liberation Sans", sans-serif;
  text-shadow: 1px 1px 1px #2d4420;
}
.quick {
  display: flex;
  align-items: center;
  gap: 7px;
  width: 102px;
  padding-left: 12px;
}
.chev {
  margin: -12px 0 0 3px;
  font-size: 16px;
}
.tasks {
  display: flex;
  align-items: center;
  gap: 2px;
}
.tasks button {
  display: flex;
  align-items: center;
  gap: 3px;
  width: 158px;
  height: 25px;
  padding: 0 0 2px 8px;
  border: 1px solid #8f9e68;
  border-radius: 3px;
  background: linear-gradient(#dde3bd, #c3cd9b 60%, #b3bf8a);
  white-space: nowrap;
}
.tasks .pressed {
  border-color: #59633f;
  background: #87916d;
  color: #fff;
  padding: 0 0 0 9px;
}
.lang {
  align-self: center;
  margin-left: auto;
  padding: 1px;
  background: #8d9a70;
  color: #fff;
}
.tray {
  display: flex;
  align-items: center;
  gap: 2px;
  width: 147px;
  margin-left: 19px;
  padding-left: 10px;
  border-left: 1px solid #8c9862;
  background: linear-gradient(#f4efcd, #e8e0b0 20%, #e6ddb0 85%, #c7bf8c);
}
.tray time {
  margin-left: 5px;
}
```
